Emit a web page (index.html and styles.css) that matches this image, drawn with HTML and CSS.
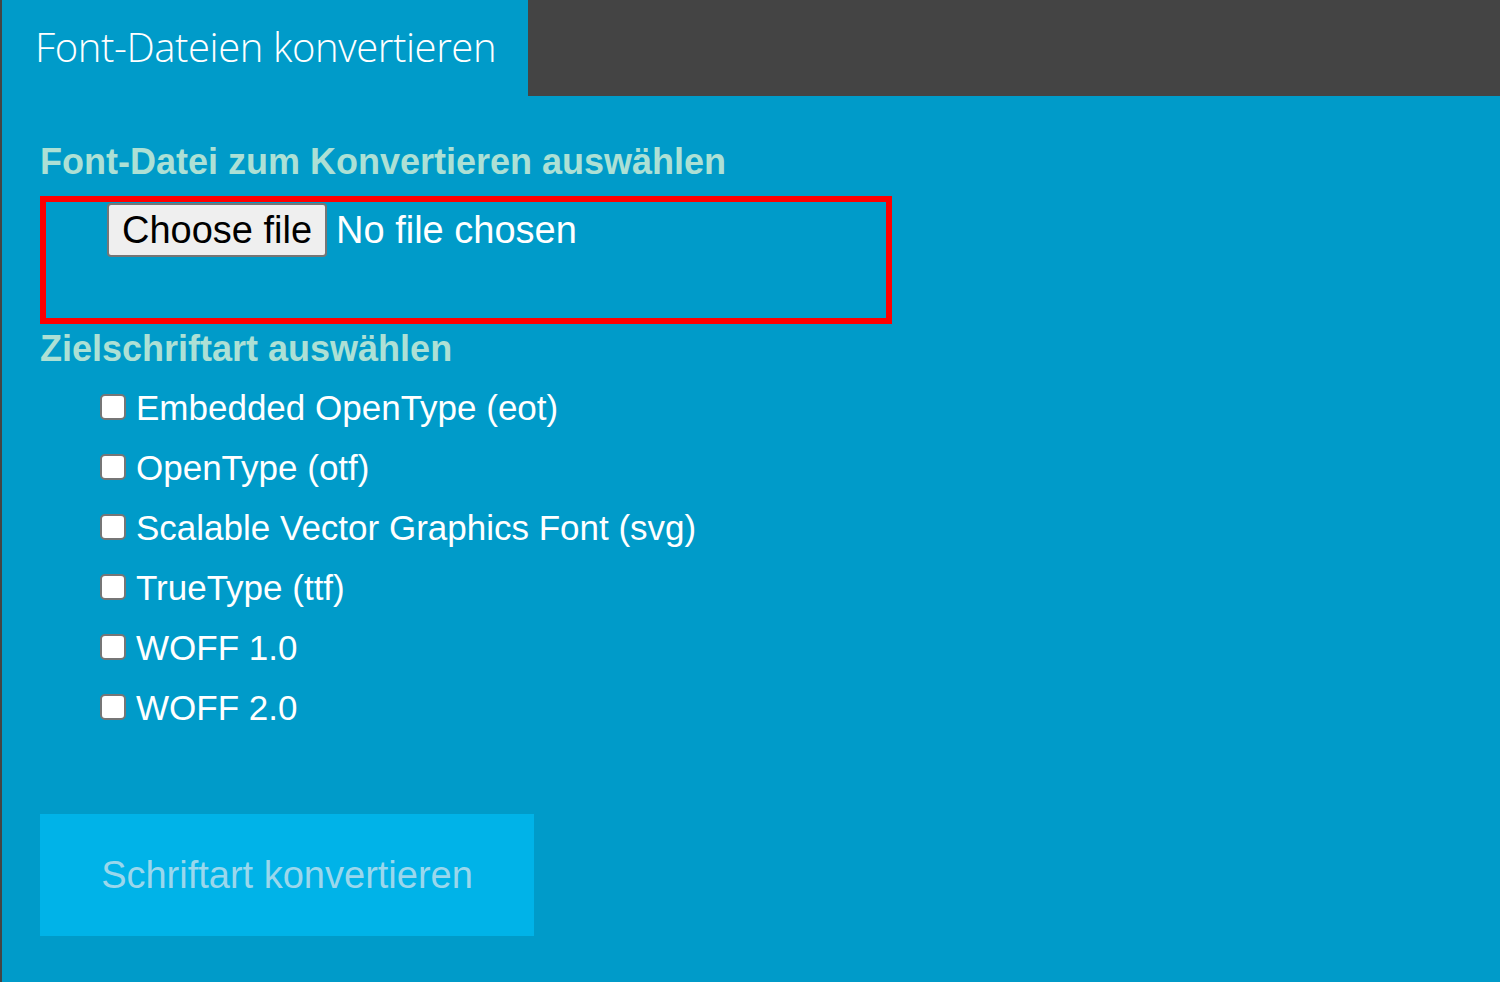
FILE: index.html
```html
<!DOCTYPE html>
<html lang="de">
<head>
<meta charset="utf-8">
<title>Font-Dateien konvertieren</title>
<link rel="stylesheet" href="styles.css">
</head>
<body>
<div class="page">
  <header class="topbar">
    <div class="tab">Font-Dateien konvertieren</div>
    <div class="filler"></div>
  </header>
  <main class="content">
    <h2 class="section-title">Font-Datei zum Konvertieren auswählen</h2>
    <div class="dropzone">
      <label class="file-input">
        <span class="file-btn">Choose file</span>
        <span class="file-name">No file chosen</span>
      </label>
    </div>
    <h2 class="section-title second">Zielschriftart auswählen</h2>
    <ul class="options">
      <li><label><input type="checkbox" class="cb"><span class="opt-text">Embedded OpenType (eot)</span></label></li>
      <li><label><input type="checkbox" class="cb"><span class="opt-text">OpenType (otf)</span></label></li>
      <li><label><input type="checkbox" class="cb"><span class="opt-text">Scalable Vector Graphics Font (svg)</span></label></li>
      <li><label><input type="checkbox" class="cb"><span class="opt-text">TrueType (ttf)</span></label></li>
      <li><label><input type="checkbox" class="cb"><span class="opt-text">WOFF 1.0</span></label></li>
      <li><label><input type="checkbox" class="cb"><span class="opt-text">WOFF 2.0</span></label></li>
    </ul>
    <button class="convert" type="button">Schriftart konvertieren</button>
  </main>
</div>
</body>
</html>
```
FILE: styles.css
```css
html, body {
  margin: 0;
  padding: 0;
}
body {
  background: #009bc9;
  font-family: "Liberation Sans", Arial, sans-serif;
  color: #ffffff;
}
.page {
  border-left: 2px solid #444444;
  min-height: 982px;
  box-sizing: border-box;
}
.topbar {
  display: flex;
  height: 96px;
}
.tab {
  width: 526px;
  box-sizing: border-box;
  padding: 21px 0 0 33px;
  font-family: "Open Sans", sans-serif;
  font-weight: 300;
  font-size: 40px;
  letter-spacing: -0.4px;
  line-height: 52px;
  color: #ffffff;
}
.filler {
  flex: 1;
  background: #444444;
}
.content {
  padding: 45px 0 0 38px;
}
.section-title {
  margin: 0;
  font-size: 36px;
  line-height: 42px;
  font-weight: bold;
  color: #ade0d5;
}
.dropzone {
  margin-top: 13px;
  width: 852px;
  height: 128px;
  box-sizing: border-box;
  border: 6px solid #ff0000;
  padding: 1px 0 0 61px;
}
.file-input {
  display: flex;
  align-items: center;
  gap: 9px;
}
.file-btn {
  display: inline-block;
  background: #efefef;
  color: #000000;
  border: 2px solid #767676;
  border-radius: 4px;
  width: 220px;
  height: 54px;
  box-sizing: border-box;
  text-align: center;
  font-size: 38px;
  line-height: 50px;
}
.file-name {
  font-size: 38px;
  line-height: 54px;
}
.second {
  margin-top: 4px;
}
.options {
  list-style: none;
  margin: 0;
  padding: 7px 0 0 60px;
}
.options li {
  height: 60px;
}
.options label {
  display: flex;
  align-items: center;
  gap: 10px;
  font-size: 35px;
  line-height: 58px;
  height: 60px;
}
.opt-text {
  padding-top: 2px;
}
.cb {
  appearance: none;
  -webkit-appearance: none;
  margin: 0;
  width: 26px;
  height: 26px;
  background: #ffffff;
  border: 2px solid #767676;
  border-radius: 5px;
  box-sizing: border-box;
}
.convert {
  display: block;
  margin-top: 77px;
  width: 494px;
  height: 122px;
  border: none;
  background: #00b3e8;
  color: #9ad7ec;
  font-family: "Liberation Sans", Arial, sans-serif;
  font-size: 38px;
  padding: 0;
}
```
